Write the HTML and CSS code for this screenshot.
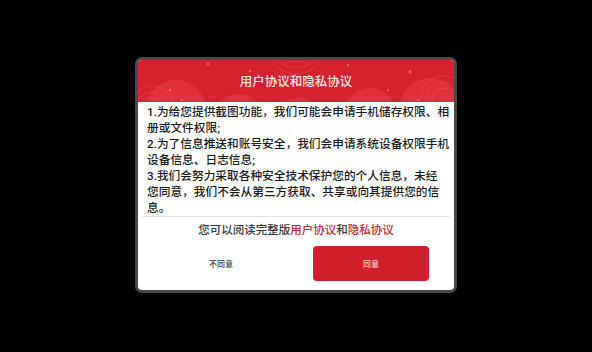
FILE: index.html
```html
<!DOCTYPE html>
<html lang="zh-CN">
<head>
<meta charset="utf-8">
<link rel="stylesheet" href="styles.css">
</head>
<body>
<div class="frame">
  <div class="dialog">
    <div class="header">
      <svg class="deco" width="316" height="42" viewBox="0 0 316 42">
        <rect width="316" height="42" fill="#d6222f"/>
        <g fill="#e0303b">
          <circle cx="38" cy="50" r="30"/>
          <circle cx="100" cy="60" r="26"/>
          <circle cx="160" cy="64" r="26"/>
          <circle cx="232" cy="54" r="26"/>
          <circle cx="292" cy="48" r="30"/>
        </g>
        <g fill="none" stroke="#f06670" stroke-opacity="0.4" stroke-width="0.8">
          <circle cx="14" cy="48" r="10"/>
          <circle cx="14" cy="48" r="16"/>
          <circle cx="14" cy="48" r="22"/>
          <circle cx="306" cy="40" r="12"/>
          <circle cx="306" cy="40" r="18"/>
          <circle cx="306" cy="40" r="24"/>
          <circle cx="158" cy="-14" r="16"/>
          <circle cx="158" cy="-14" r="22"/>
          <circle cx="158" cy="-14" r="28"/>
        </g>
        <g fill="#ffffff" fill-opacity="0.3">
          <circle cx="32" cy="30" r="1.2"/>
          <circle cx="70" cy="4" r="1.4"/>
          <circle cx="112" cy="11" r="1.3"/>
          <circle cx="210" cy="5" r="1.2"/>
          <circle cx="272" cy="12" r="1.4"/>
          <circle cx="250" cy="30" r="1.1"/>
          <circle cx="44" cy="40" r="1"/>
          <circle cx="280" cy="40" r="1"/>
        </g>
      </svg>
      <div class="title">用户协议和隐私协议</div>
    </div>
    <div class="content">
      <p class="terms">1.为给您提供截图功能，我们可能会申请手机储存权限、相<br>册或文件权限;<br>2.为了信息推送和账号安全，我们会申请系统设备权限手机<br>设备信息、日志信息;<br>3.我们会努力采取各种安全技术保护您的个人信息，未经<br>您同意，我们不会从第三方获取、共享或向其提供您的信<br>息。</p>
    </div>
    <div class="divider"></div>
    <div class="notice">您可以阅读完整版<span class="link">用户协议</span>和<span class="link">隐私协议</span></div>
    <div class="actions">
      <div class="btn btn-cancel">不同意</div>
      <div class="btn btn-ok">同意</div>
    </div>
  </div>
</div>
</body>
</html>
```
FILE: styles.css
```css
html, body {
  margin: 0;
  padding: 0;
  background: #000;
}
body {
  width: 592px;
  height: 352px;
  display: flex;
  align-items: center;
  justify-content: center;
  font-family: Roboto, "Noto Sans CJK SC", sans-serif;
}
.frame {
  width: 316px;
  height: 230px;
  border: 3px solid #4a4a4a;
  border-radius: 7px;
  overflow: hidden;
  background: #fff;
  margin-bottom: 2px;
}
.dialog {
  display: flex;
  flex-direction: column;
  height: 100%;
}
.header {
  position: relative;
  height: 42px;
  flex: none;
  display: flex;
  align-items: center;
  justify-content: center;
}
.deco {
  position: absolute;
  left: 0;
  top: 0;
  display: block;
}
.title {
  position: relative;
  color: #fbe6e7;
  font-size: 12.5px;
  font-weight: 500;
  line-height: 16px;
  margin-top: 2px;
}
.content {
  padding: 2px 0 0 9px;
}
.terms {
  margin: 0;
  font-size: 11.7px;
  font-weight: 500;
  line-height: 16px;
  color: #1a1a1a;
  white-space: nowrap;
}
.divider {
  height: 1px;
  background: #e2e2e2;
  margin: 0 4px;
}
.notice {
  margin-top: 5px;
  text-align: center;
  font-size: 11.5px;
  font-weight: 500;
  line-height: 16px;
  color: #3a3a3a;
}
.link {
  color: #c42a3a;
}
.actions {
  display: flex;
  gap: 34px;
  padding: 0 25px 9px;
  margin-top: 8px;
}
.btn {
  flex: 1;
  height: 35px;
  border-radius: 4px;
  display: flex;
  align-items: center;
  justify-content: center;
  font-size: 8px;
  font-weight: 500;
}
.btn-cancel {
  color: #333;
}
.btn-ok {
  background: #cf1f2c;
  color: #f6d3d5;
}
```
